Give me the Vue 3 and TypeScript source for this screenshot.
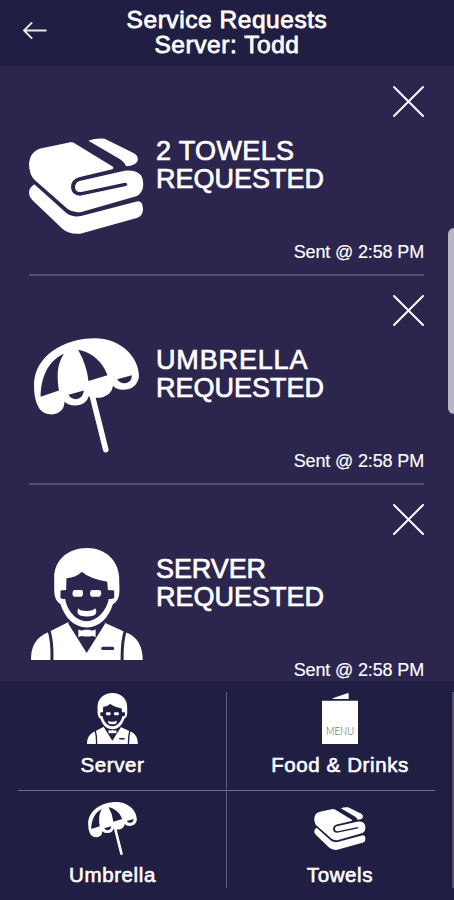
<script setup lang="ts">
import { h, type FunctionalComponent } from 'vue'

type IconName = 'server' | 'menu' | 'umbrella' | 'towels'

interface ServiceRequest {
  icon: IconName
  lines: [string, string]
  sent: string
}

const requests: ServiceRequest[] = [
  { icon: 'towels', lines: ['2 TOWELS', 'REQUESTED'], sent: 'Sent @ 2:58 PM' },
  { icon: 'umbrella', lines: ['UMBRELLA', 'REQUESTED'], sent: 'Sent @ 2:58 PM' },
  { icon: 'server', lines: ['SERVER', 'REQUESTED'], sent: 'Sent @ 2:58 PM' },
]

const actions: { icon: IconName; label: string }[] = [
  { icon: 'server', label: 'Server' },
  { icon: 'menu', label: 'Food & Drinks' },
  { icon: 'umbrella', label: 'Umbrella' },
  { icon: 'towels', label: 'Towels' },
]

const fill = (d: string) => h('path', { d, fill: '#fff' })
const cut = (d: string) => h('path', { d, fill: 'var(--surface)' })
const groove = (d: string, width: number) =>
  h('path', {
    d,
    fill: 'none',
    stroke: 'var(--surface)',
    'stroke-width': width,
    'stroke-linecap': 'round',
    'stroke-linejoin': 'round',
  })
const line = (d: string, width: number) =>
  h('path', { d, fill: 'none', stroke: '#fff', 'stroke-width': width, 'stroke-linecap': 'round' })

const boxes: Record<IconName, string> = {
  server: '45 37 338 338',
  menu: '0 0 108 153',
  umbrella: '57 38 316 344',
  towels: '42 40 345 288',
}

const shapes: Record<IconName, () => ReturnType<typeof h>[]> = {
  towels: () => [
    fill('M58 179Q42 190 42 203Q42 217 54 228L143 313Q162 330 196 327L365 280Q385 274 384 252Q383 229 368 230L198 274Q173 279 153 264Z'),
    fill('M80 71L166 53Q174 52 181 57L294 126Q297 130 292 134L192 158Q168 166 168 187Q169 212 195 213L333 184Q339 181 336 177Q333 173 326 175L199 202Q181 204 180 188Q180 174 193 169L329 138Q372 133 382 160Q392 199 366 214L202 261Q178 267 158 253L59 166Q43 151 42 118Q45 79 80 71Z'),
    fill('M220 48Q241 40 269 42L357 86Q371 95 368 108Q363 122 333 125Q328 111 314 103Z'),
  ],
  umbrella: () => [
    fill('M57 180C57 91 147 38 240 38C315 38 373 92 373 153C369 180 350 193 326 193Q304 193 295 181Q291 207 264 215Q240 220 222 212Q213 239 183 240Q158 240 149 228Q148 263 110 267Q78 267 67 238Q57 217 57 180Z'),
    cut('M77 214C77 157 99 105 147 84C123 121 127 156 132 195Z'),
    cut('M190 72C233 80 265 110 278 149L221 166Q216 119 190 72Z'),
    cut('M161 208L207 195Q204 219 184 221Q168 221 161 208Z'),
    cut('M307 161L352 149Q350 172 331 173Q316 174 307 161Z'),
    line('M231 205L273 373', 17),
  ],
  server: () => [
    fill('M45 375Q44 321 83 298L157 261Q174 269 188 277Q211 282 232 277Q251 270 264 261L344 297Q382 319 382 375Z'),
    cut('M157 264L165 256Q190 270 213 270Q240 270 261 256L269 265L213 354Z'),
    fill('M115 125C116 73 157 37 214 37C270 37 309 76 311 125L312 164Q312 198 292 207C279 248 253 276 214 277C173 276 148 248 134 207Q115 196 115 164Z'),
    cut('M152 128Q183 127 198 109Q222 130 275 139L277 164L296 165V188Q287 193 280 190C272 227 245 257 213 258C180 257 154 226 148 190Q140 193 134 188V165L151 164Z'),
    fill('M176 164H197Q203 165 202 174Q202 183 196 184H176Q170 182 170 174Q170 165 176 164Z'),
    fill('M229 164H250Q257 165 257 174Q256 183 250 184H229Q223 182 223 174Q223 165 229 164Z'),
    fill('M188 219Q190 227 214 227Q233 227 238 219Q244 224 241 235Q237 244 214 244Q191 244 186 235Q183 224 188 219Z'),
    fill('M188 283Q200 289 207 284H221Q230 289 240 282V306Q230 300 223 304H205Q199 300 188 306Z'),
    groove('M100 288Q110 323 108 375M329 288Q319 323 320 375', 9),
    groove('M262 340H291', 10),
  ],
  menu: () => [
    fill('M32 16L78 0Q80 0 80 3V18H32Z'),
    fill('M0 23H108V153H0Z'),
    h(
      'text',
      {
        x: 12,
        y: 126,
        fill: '#3c3a55',
        'font-size': 32,
        'font-family': 'Lato, sans-serif',
        'font-weight': 300,
        textLength: 84,
        lengthAdjust: 'spacingAndGlyphs',
      },
      'MENU',
    ),
  ],
}

const Pictogram: FunctionalComponent<{ name: IconName }> = (props) =>
  h('svg', { viewBox: boxes[props.name], 'aria-hidden': 'true' }, shapes[props.name]())
Pictogram.props = ['name']
</script>

<template>
  <div class="screen">
    <header class="header">
      <button class="plain back" aria-label="Back">
        <svg viewBox="0 0 26 20"><path d="M25 10H2M10 2L2 10L10 18" /></svg>
      </button>
      <h1 class="title">Service Requests<br />Server: Todd</h1>
    </header>

    <main class="list">
      <article v-for="request in requests" :key="request.icon" class="request">
        <button class="plain close" aria-label="Dismiss">
          <svg viewBox="0 0 33 33"><path d="M2 2L31 31M31 2L2 31" /></svg>
        </button>
        <div class="body">
          <div class="picture"><Pictogram :name="request.icon" :class="['large', request.icon]" /></div>
          <h2 class="name">
            <span :class="['subject', request.icon]">{{ request.lines[0] }}</span><br />{{ request.lines[1] }}
          </h2>
        </div>
        <p class="sent">{{ request.sent }}</p>
      </article>
      <div class="scrollbar"></div>
    </main>

    <nav class="nav">
      <div class="actions">
        <button v-for="action in actions" :key="action.icon" class="plain action">
          <span class="glyph"><Pictogram :name="action.icon" :class="['small', action.icon]" /></span>
          <span class="label">{{ action.label }}</span>
        </button>
      </div>
      <div class="edge"></div>
    </nav>
  </div>
</template>

<style>
body {
  margin: 0;
  background: #211e43;
}
</style>

<style scoped>
.screen {
  display: flex;
  flex-direction: column;
  width: 454px;
  height: 900px;
  overflow: hidden;
  color: #fff;
  font-family: 'Liberation Sans', Arial, sans-serif;
}
.plain {
  padding: 0;
  border: 0;
  background: none;
  color: inherit;
  font: inherit;
}
svg {
  display: block;
}
.header {
  display: grid;
  grid-template-columns: 70px 1fr 70px;
  flex: none;
  height: 66px;
  background: #211e43;
}
.back {
  margin: 21px 0 0 22px;
  width: 25px;
  height: 19px;
}
.back svg {
  width: 25px;
  height: 19px;
}
.back path,
.close path {
  fill: none;
  stroke: #fff;
  stroke-width: 2;
  stroke-linecap: round;
}
.back path {
  stroke: #e9e8e6;
}
.title {
  margin: 7px 0 0;
  font-size: 24.5px;
  font-weight: 400;
  line-height: 25px;
  letter-spacing: 0.55px;
  text-align: center;
  white-space: nowrap;
  -webkit-text-stroke: 0.8px #fff;
}
.list {
  --surface: #2c264f;
  position: relative;
  flex: none;
  box-sizing: border-box;
  height: 615px;
  padding-top: 1px;
  overflow: hidden;
  background: var(--surface);
}
.request {
  display: flex;
  flex-direction: column;
  box-sizing: border-box;
  height: 209px;
  margin: 0 30px 0 29px;
  padding-top: 18px;
  border-bottom: 2px solid #55506f;
}
.close {
  align-self: flex-end;
  width: 33px;
  height: 33px;
  margin-right: -1px;
}
.close svg {
  width: 33px;
  height: 33px;
}
.body {
  display: flex;
  gap: 12px;
  height: 114px;
  margin-top: 11px;
}
.picture {
  display: flex;
  align-items: center;
  justify-content: center;
  width: 115px;
}
.picture svg {
  flex: none;
}
.large.towels {
  width: 115px;
  height: 96px;
}
.large.umbrella {
  width: 105px;
  height: 115px;
}
.large.server {
  width: 112px;
  height: 112px;
}
.name {
  margin: 8px 0 0;
  font-size: 27px;
  font-weight: 400;
  line-height: 28px;
  white-space: nowrap;
  -webkit-text-stroke: 0.7px #fff;
}
.subject.towels {
  letter-spacing: 0.35px;
}
.subject.umbrella {
  letter-spacing: 0.85px;
}
.subject.server {
  letter-spacing: -0.1px;
}
.sent {
  margin: 0;
  font-size: 18px;
  line-height: 18px;
  letter-spacing: -0.15px;
  text-align: right;
  -webkit-text-stroke: 0.15px #fff;
}
.scrollbar {
  position: absolute;
  top: 162px;
  right: -6px;
  width: 12px;
  height: 186px;
  border-radius: 6px;
  background: #b9b5c5;
}
.nav {
  --surface: #211e43;
  display: flex;
  flex: none;
  box-sizing: border-box;
  justify-content: space-between;
  height: 219px;
  padding: 11px 0 12px;
  background: var(--surface);
}
.actions {
  display: grid;
  grid-template-columns: 209px 208px;
  grid-template-rows: 99px 97px;
  margin-left: 18px;
}
.action {
  display: flex;
  flex-direction: column;
  align-items: center;
  box-sizing: border-box;
}
.action:nth-child(odd) {
  padding-right: 19px;
  border-right: 1px solid #615e7b;
}
.action:nth-child(even) {
  padding-left: 18px;
}
.action:nth-child(-n + 2) {
  border-bottom: 1px solid #74718a;
}
.glyph {
  display: flex;
  align-items: center;
  justify-content: center;
  flex: none;
  height: 52px;
}
.action:nth-child(n + 3) .glyph {
  margin-top: 11px;
}
.small.server {
  width: 51px;
  height: 51px;
}
.small.menu {
  width: 36px;
  height: 51px;
}
.small.umbrella {
  width: 51px;
  height: 53px;
}
.small.towels {
  width: 52px;
  height: 43px;
}
.label {
  margin-top: 9px;
  font-size: 20.5px;
  line-height: 24px;
  letter-spacing: 0.6px;
  white-space: nowrap;
  -webkit-text-stroke: 0.6px #fff;
}
.edge {
  width: 2px;
  background: #524f6d;
}
</style>
